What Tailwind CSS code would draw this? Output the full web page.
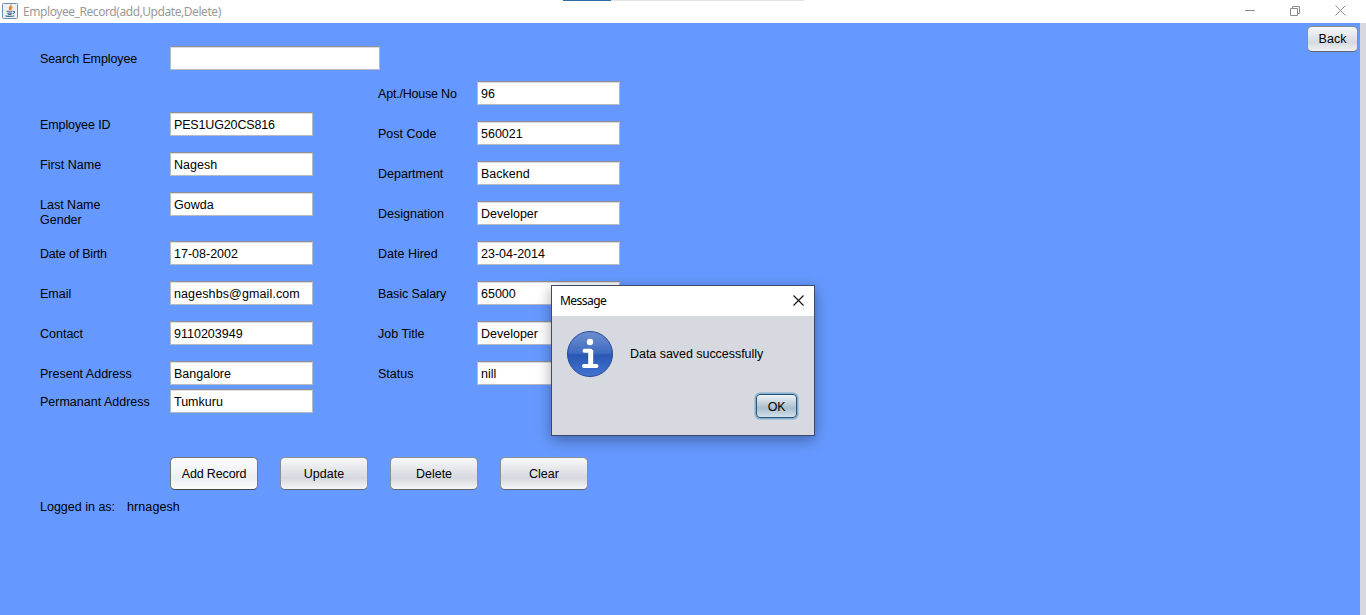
<!DOCTYPE html>
<html lang="en">
<head>
<meta charset="utf-8">
<title>Employee_Record(add,Update,Delete)</title>
<script src="https://cdn.jsdelivr.net/npm/@tailwindcss/browser@4"></script>
</head>
<body class="w-[1366px] h-[615px] overflow-hidden bg-white font-['Liberation_Sans',Arial,sans-serif] text-[12.5px] leading-[15px] text-black">
<header class="relative flex h-[23px] items-start bg-white">
  <svg class="mt-[3px] ml-[2px] size-4" viewBox="0 0 16 16" fill="none">
    <rect x=".5" y=".5" width="15" height="15" rx="1" fill="#eef1f4" stroke="#6f8fb0"/>
    <path d="M8.6 1.800c1.500 1.600-2.600 2.500-.9 5M10.400 4.200c-2 .9-1.800 1.500-1.200 2.800" stroke="#e8842a" stroke-width="1.500"/>
    <path d="M4.500 8.300h6M5.200 10.100h4.800M5.800 11.600h3.700M3.300 12.700c2.500 1.200 7 1 9 .1M11 8.500c2.200-.6 2 1.600-.4 2.200" stroke="#4a7196" stroke-width="1.100"/>
  </svg>
  <h1 class="mt-[4px] ml-[5px] font-['Noto_Sans',sans-serif] text-xs leading-[16px] tracking-[-0.43px] text-[#999]">Employee_Record(add,Update,Delete)</h1>
  <div class="absolute top-0 left-[563px] flex h-px w-[241px] bg-[#e3e3e3]"><div class="w-12 bg-[#2f6ea5]"></div></div>
  <div class="ml-auto flex pr-[20px]">
    <svg class="mt-[5px] h-[11px] w-[101px]" viewBox="0 0 101 11" fill="none" stroke="#8c8c8c">
      <path d="M0 5.500h10M45.500 3.500h7v7h-7zM47.500 3.500v-2h7v7h-2M90.500.5l10 10M100.500.5l-10 10"/>
    </svg>
  </div>
</header>
<main class="flex h-[592px] border-r-6 border-[#d6d9df] bg-[#6699ff]">
  <div class="w-[620px] pt-[23px] pl-10">
    <div class="flex h-6 items-start"><span class="w-[130px] pt-[6px] tracking-[-0.1px]">Search Employee</span><div class="h-6 w-[210px] border border-t-[#8d9097] border-[#b5bac4] bg-white shadow-[inset_0_1px_0_#dcdcdc]"></div></div>
    <div class="flex h-[387px]">
      <div class="w-[338px] pt-[42px]">
        <div class="flex h-10 items-start"><span class="w-[130px] pt-[6px] tracking-[-0.1px]">Employee ID</span><div class="h-6 w-[143px] border border-t-[#8d9097] border-[#b5bac4] bg-white pt-[5px] pl-[3px] tracking-[-0.15px] shadow-[inset_0_1px_0_#dcdcdc]">PES1UG20CS816</div></div>
        <div class="flex h-10 items-start"><span class="w-[130px] pt-[6px]">First Name</span><div class="h-6 w-[143px] border border-t-[#8d9097] border-[#b5bac4] bg-white pt-[5px] pl-[3px] shadow-[inset_0_1px_0_#dcdcdc]">Nagesh</div></div>
        <div class="flex h-[49px] items-start"><span class="w-[130px] pt-[6px]">Last Name<br>Gender</span><div class="h-6 w-[143px] border border-t-[#8d9097] border-[#b5bac4] bg-white pt-[5px] pl-[3px] shadow-[inset_0_1px_0_#dcdcdc]">Gowda</div></div>
        <div class="flex h-10 items-start"><span class="w-[130px] pt-[6px] tracking-[-0.2px]">Date of Birth</span><div class="h-6 w-[143px] border border-t-[#8d9097] border-[#b5bac4] bg-white pt-[5px] pl-[3px] shadow-[inset_0_1px_0_#dcdcdc]">17-08-2002</div></div>
        <div class="flex h-10 items-start"><span class="w-[130px] pt-[6px]">Email</span><div class="h-6 w-[143px] border border-t-[#8d9097] border-[#b5bac4] bg-white pt-[5px] pl-[3px] tracking-[0.11px] shadow-[inset_0_1px_0_#dcdcdc]">nageshbs@gmail.com</div></div>
        <div class="flex h-10 items-start"><span class="w-[130px] pt-[6px]">Contact</span><div class="h-6 w-[143px] border border-t-[#8d9097] border-[#b5bac4] bg-white pt-[5px] pl-[3px] shadow-[inset_0_1px_0_#dcdcdc]">9110203949</div></div>
        <div class="flex h-7 items-start"><span class="w-[130px] pt-[6px]">Present Address</span><div class="h-6 w-[143px] border border-t-[#8d9097] border-[#b5bac4] bg-white pt-[5px] pl-[3px] shadow-[inset_0_1px_0_#dcdcdc]">Bangalore</div></div>
        <div class="flex h-7 items-start"><span class="w-[130px] pt-[6px]">Permanant Address</span><div class="h-6 w-[143px] border border-t-[#8d9097] border-[#b5bac4] bg-white pt-[5px] pl-[3px] shadow-[inset_0_1px_0_#dcdcdc]">Tumkuru</div></div>
      </div>
      <div class="w-[242px] pt-[11px]">
        <div class="flex h-10 items-start"><span class="w-[99px] pt-[6px] tracking-[-0.2px]">Apt./House No</span><div class="h-6 w-[143px] border border-t-[#8d9097] border-[#b5bac4] bg-white pt-[5px] pl-[3px] shadow-[inset_0_1px_0_#dcdcdc]">96</div></div>
        <div class="flex h-10 items-start"><span class="w-[99px] pt-[6px]">Post Code</span><div class="h-6 w-[143px] border border-t-[#8d9097] border-[#b5bac4] bg-white pt-[5px] pl-[3px] shadow-[inset_0_1px_0_#dcdcdc]">560021</div></div>
        <div class="flex h-10 items-start"><span class="w-[99px] pt-[6px]">Department</span><div class="h-6 w-[143px] border border-t-[#8d9097] border-[#b5bac4] bg-white pt-[5px] pl-[3px] shadow-[inset_0_1px_0_#dcdcdc]">Backend</div></div>
        <div class="flex h-10 items-start"><span class="w-[99px] pt-[6px]">Designation</span><div class="h-6 w-[143px] border border-t-[#8d9097] border-[#b5bac4] bg-white pt-[5px] pl-[3px] shadow-[inset_0_1px_0_#dcdcdc]">Developer</div></div>
        <div class="flex h-10 items-start"><span class="w-[99px] pt-[6px]">Date Hired</span><div class="h-6 w-[143px] border border-t-[#8d9097] border-[#b5bac4] bg-white pt-[5px] pl-[3px] shadow-[inset_0_1px_0_#dcdcdc]">23-04-2014</div></div>
        <div class="flex h-10 items-start"><span class="w-[99px] pt-[6px] tracking-[-0.1px]">Basic Salary</span><div class="h-6 w-[143px] border border-t-[#8d9097] border-[#b5bac4] bg-white pt-[5px] pl-[3px] shadow-[inset_0_1px_0_#dcdcdc]">65000</div></div>
        <div class="flex h-10 items-start"><span class="w-[99px] pt-[6px]">Job Title</span><div class="h-6 w-[143px] border border-t-[#8d9097] border-[#b5bac4] bg-white pt-[5px] pl-[3px] shadow-[inset_0_1px_0_#dcdcdc]">Developer</div></div>
        <div class="flex h-10 items-start"><span class="w-[99px] pt-[6px]">Status</span><div class="h-6 w-[143px] border border-t-[#8d9097] border-[#b5bac4] bg-white pt-[5px] pl-[3px] shadow-[inset_0_1px_0_#dcdcdc]">nill</div></div>
      </div>
    </div>
    <div class="flex gap-[22px] pl-[130px] text-center">
      <button class="h-[33px] w-[88px] rounded-[5px] border border-[#73767c] border-b-[#3e4654] bg-linear-to-b from-[#fcfcfd] via-[#eceef2] via-65% to-[#fdfdfe] pt-[2px] tracking-[-0.15px]">Add Record</button>
      <button class="h-[33px] w-[88px] rounded-[5px] border border-[#8a8e96] border-b-[#60656e] bg-linear-to-b from-[#f7f8fa] from-0% via-[#d6d9df] via-65% to-[#f4f5f8] pt-[2px]">Update</button>
      <button class="h-[33px] w-[88px] rounded-[5px] border border-[#8a8e96] border-b-[#60656e] bg-linear-to-b from-[#f7f8fa] from-0% via-[#d6d9df] via-65% to-[#f4f5f8] pt-[2px]">Delete</button>
      <button class="h-[33px] w-[88px] rounded-[5px] border border-[#8a8e96] border-b-[#60656e] bg-linear-to-b from-[#f7f8fa] from-0% via-[#d6d9df] via-65% to-[#f4f5f8] pt-[2px]">Clear</button>
    </div>
    <div class="flex pt-[10px]"><span class="w-[87px]">Logged in as:</span><span class="tracking-[0.1px]">hrnagesh</span></div>
  </div>
  <button class="mt-[3px] mr-[2px] ml-auto h-[26px] w-[51px] rounded-[5px] border border-[#8a8e96] border-b-[#60656e] bg-linear-to-b from-[#f7f8fa] from-0% via-[#d6d9df] via-65% to-[#f0f1f5] pt-px">Back</button>
</main>
<section class="absolute top-[285px] left-[551px] flex h-[151px] w-[264px] flex-col border border-[#3b4a6b] bg-[#d6d9df] shadow-[0_4px_14px_rgba(0,0,0,0.35)]">
  <div class="flex h-[30px] items-start justify-between bg-white pr-[10px] pl-2">
    <h2 class="pt-[7px] font-['Noto_Sans',sans-serif] text-xs leading-[16px] tracking-[-0.55px]">Message</h2>
    <svg class="mt-[9px] size-[11px]" viewBox="0 0 11 11" fill="none" stroke="#111" stroke-width="1.100"><path d="M.5.5l10 10M10.500.5l-10 10"/></svg>
  </div>
  <div class="flex items-center gap-4 pt-[14px] pl-[14px]">
    <svg class="size-12" viewBox="0 0 48 48">
      <defs><linearGradient id="g" x1="0" y1="0" x2="0" y2="1"><stop offset="0" stop-color="#6d8fd0"/><stop offset=".48" stop-color="#3f6cc0"/><stop offset=".52" stop-color="#2a57b4"/><stop offset="1" stop-color="#4474d0"/></linearGradient></defs>
      <circle cx="24" cy="24" r="22.500" fill="url(#g)" stroke="#27479a"/>
      <circle cx="24" cy="12" r="3.200" fill="#fff"/>
      <path d="M18.500 20.800h6v15M18 36h12.500" fill="none" stroke="#fff" stroke-width="4" stroke-linecap="round" stroke-linejoin="round"/>
      <path d="M24.800 20v16" fill="none" stroke="#fff" stroke-width="4.800"/>
    </svg>
    <span class="tracking-[-0.04px]">Data saved successfully</span>
  </div>
  <button class="mt-[16px] mr-[17px] ml-auto h-6 w-[41px] rounded-[4px] border border-[#2d5578] bg-linear-to-b from-[#eef2f6] via-[#a9bdcd] via-60% to-[#d3e2ec] pt-[2px] tracking-[-0.3px] shadow-[0_0_0_1.500px_#83b0d0]">OK</button>
</section>
</body>
</html>
